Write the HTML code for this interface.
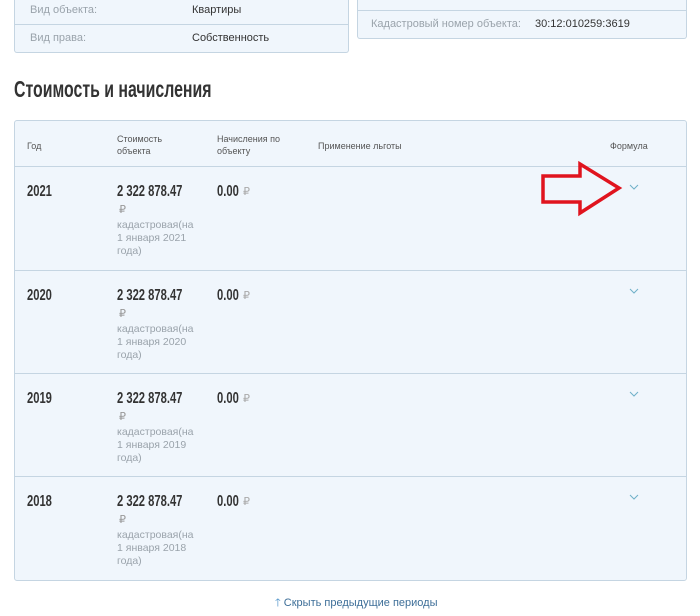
<!DOCTYPE html>
<html><head><meta charset="utf-8"><style>
body{margin:0;width:700px;height:616px;background:#fff;font-family:"Liberation Sans",sans-serif;position:relative;overflow:hidden}
.a{position:absolute}
.box{position:absolute;background:#f0f6fc;border:1px solid #c5d5e2;border-top:none;border-radius:0 0 3px 3px}
.lbl{font-size:11px;color:#9aa3ab;position:absolute}
.val{font-size:11px;color:#333;position:absolute}
.cond{display:inline-block;transform:scaleX(.7);transform-origin:left;font-weight:bold;white-space:nowrap}
.th{position:absolute;font-size:9px;color:#555;line-height:12px}
.row{position:absolute;left:0;width:671px;border-top:1px solid #c5d5e2}
.yr{position:absolute;left:12px;top:16px;font-size:16px;color:#333}
.cost{position:absolute;left:102px;top:16px;font-size:16px;color:#333}
.rub{position:absolute;left:104px;top:36px;font-size:11px;color:#999}
.note{position:absolute;left:102px;top:52px;font-size:10.5px;color:#9aa3ab;line-height:13px}
.ch{position:absolute;left:202px;top:16px;font-size:16px;color:#333}
.ch2{position:absolute;left:228px;top:18px;font-size:11px;color:#aaa}
.chev{position:absolute;left:614px;top:17px}
</style></head><body>
<div class="box" style="left:14px;top:-1px;width:333px;height:53px">
  <div class="lbl" style="left:15px;top:5px">Вид объекта:</div>
  <div class="val" style="left:177px;top:5px">Квартиры</div>
  <div class="a" style="left:0;top:25px;width:333px;border-top:1px solid #c5d5e2"></div>
  <div class="lbl" style="left:15px;top:33px">Вид права:</div>
  <div class="val" style="left:177px;top:33px">Собственность</div>
</div>
<div class="box" style="left:357px;top:-1px;width:328px;height:39px">
  <div class="a" style="left:0;top:11px;width:328px;border-top:1px solid #c5d5e2"></div>
  <div class="lbl" style="left:13px;top:19px">Кадастровый номер объекта:</div>
  <div class="val" style="left:177px;top:19px">30:12:010259:3619</div>
</div>
<div class="a" style="left:14px;top:76px;font-size:23px;color:#333"><span class="cond" style="transform:scaleX(.69)">Стоимость и начисления</span></div>
<div class="a" style="left:14px;top:120px;width:671px;height:459px;background:#f0f6fc;border:1px solid #c5d5e2;border-radius:3px">
  <div class="th" style="left:12px;top:19px">Год</div>
  <div class="th" style="left:102px;top:12px">Стоимость<br>объекта</div>
  <div class="th" style="left:202px;top:12px">Начисления по<br>объекту</div>
  <div class="th" style="left:303px;top:19px">Применение льготы</div>
  <div class="th" style="left:595px;top:19px">Формула</div>
  <div class="row" style="top:45px;height:103px">
    <div class="yr"><span class="cond">2021</span></div><div class="cost"><span class="cond">2 322 878.47</span></div><div class="rub">₽</div>
    <div class="note">кадастровая(на<br>1 января 2021<br>года)</div>
    <div class="ch"><span class="cond">0.00</span></div><div class="ch2">₽</div>
    <svg class="chev" width="10" height="6"><path d="M1 1L5 5L9 1" stroke="#6fb0c8" fill="none" stroke-width="1"/></svg>
  </div>
  <div class="row" style="top:149px;height:102px">
    <div class="yr"><span class="cond">2020</span></div><div class="cost"><span class="cond">2 322 878.47</span></div><div class="rub">₽</div>
    <div class="note">кадастровая(на<br>1 января 2020<br>года)</div>
    <div class="ch"><span class="cond">0.00</span></div><div class="ch2">₽</div>
    <svg class="chev" width="10" height="6"><path d="M1 1L5 5L9 1" stroke="#6fb0c8" fill="none" stroke-width="1"/></svg>
  </div>
  <div class="row" style="top:252px;height:102px">
    <div class="yr"><span class="cond">2019</span></div><div class="cost"><span class="cond">2 322 878.47</span></div><div class="rub">₽</div>
    <div class="note">кадастровая(на<br>1 января 2019<br>года)</div>
    <div class="ch"><span class="cond">0.00</span></div><div class="ch2">₽</div>
    <svg class="chev" width="10" height="6"><path d="M1 1L5 5L9 1" stroke="#6fb0c8" fill="none" stroke-width="1"/></svg>
  </div>
  <div class="row" style="top:355px;height:103px">
    <div class="yr"><span class="cond">2018</span></div><div class="cost"><span class="cond">2 322 878.47</span></div><div class="rub">₽</div>
    <div class="note">кадастровая(на<br>1 января 2018<br>года)</div>
    <div class="ch"><span class="cond">0.00</span></div><div class="ch2">₽</div>
    <svg class="chev" width="10" height="6"><path d="M1 1L5 5L9 1" stroke="#6fb0c8" fill="none" stroke-width="1"/></svg>
  </div>
</div>
<svg class="a" style="left:0;top:0" width="700" height="616"><polygon points="543,176 580,176 580,164 619,188 580,213 580,202 543,202" fill="none" stroke="#e0141e" stroke-width="3.5" stroke-linejoin="miter"/></svg>
<div class="a" style="left:275px;top:594px;font-size:11px;color:#3d6e98"><span style="color:#4a90c8">🡑</span> Скрыть предыдущие периоды</div>
</body></html>
